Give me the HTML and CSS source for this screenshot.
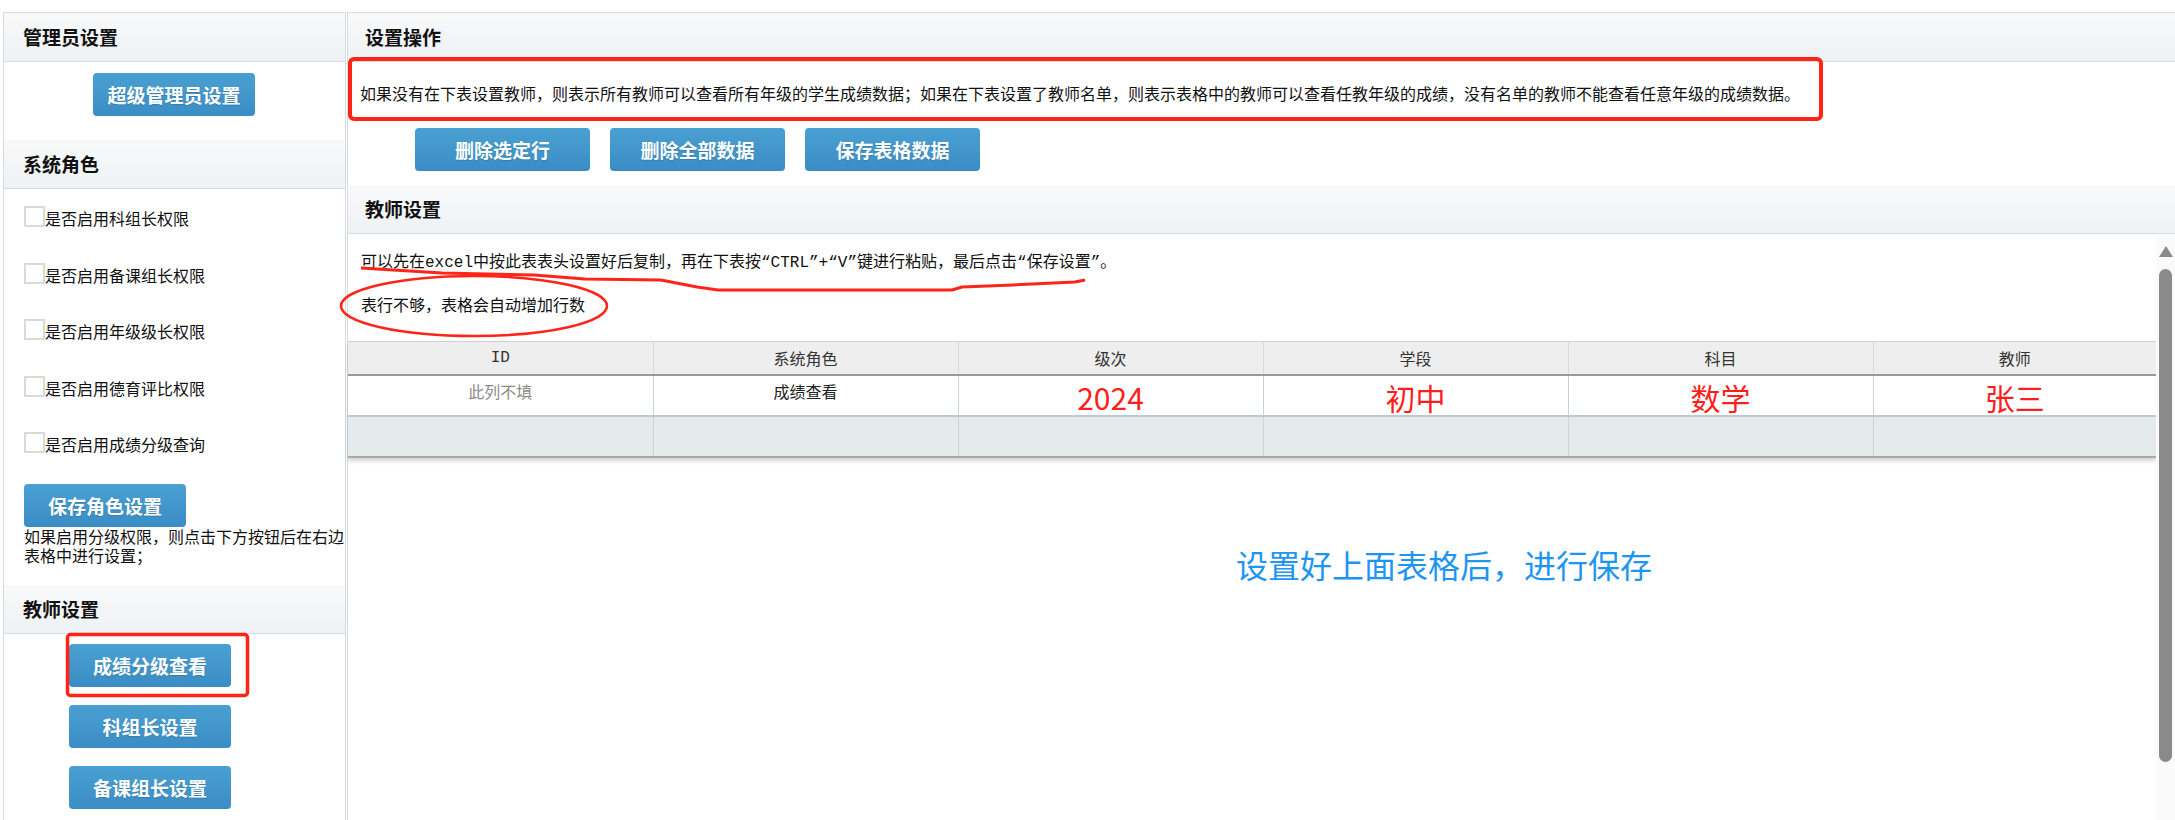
FILE: index.html
```html
<!DOCTYPE html>
<html lang="zh-CN">

<head>
    <meta charset="UTF-8">
    <title>成绩分级查看设置</title>
    <link rel="stylesheet" href="styles.css">
</head>

<body>

    <div class="page">
        <div class="side">
            <div class="panel-head">管理员设置</div>
            <div class="admin-body">
                <button class="btn btn-side">超级管理员设置</button>
            </div>

            <div class="panel-head">系统角色</div>
            <div class="role-body">
                <ul class="role-list">
                    <li><span class="check"></span>是否启用科组长权限</li>
                    <li><span class="check"></span>是否启用备课组长权限</li>
                    <li><span class="check"></span>是否启用年级级长权限</li>
                    <li><span class="check"></span>是否启用德育评比权限</li>
                    <li><span class="check"></span>是否启用成绩分级查询</li>
                </ul>
                <button class="btn btn-side btn-save-role">保存角色设置</button>
                <p class="side-note">如果启用分级权限，则点击下方按钮后在右边表格中进行设置；</p>
            </div>

            <div class="panel-head">教师设置</div>
            <div class="teacher-body">
                <button class="btn btn-side">成绩分级查看</button>
                <button class="btn btn-side">科组长设置</button>
                <button class="btn btn-side">备课组长设置</button>
            </div>
        </div>

        <div class="main">
            <div class="panel-head">设置操作</div>
            <p class="notice">如果没有在下表设置教师，则表示所有教师可以查看所有年级的学生成绩数据；如果在下表设置了教师名单，则表示表格中的教师可以查看任教年级的成绩，没有名单的教师不能查看任意年级的成绩数据。</p>
            <div class="toolbar">
                <button class="btn btn-tool">删除选定行</button>
                <button class="btn btn-tool">删除全部数据</button>
                <button class="btn btn-tool">保存表格数据</button>
            </div>

            <div class="panel-head">教师设置</div>
            <div class="scroll-wrap">
                <div class="scroll-content">
                    <p class="tip">可以先在excel中按此表表头设置好后复制，再在下表按“CTRL”+“V”键进行粘贴，最后点击“保存设置”。</p>
                    <p class="tip tip-second">表行不够，表格会自动增加行数</p>

                    <table class="grid">
                        <colgroup>
                            <col class="col">
                            <col class="col">
                            <col class="col">
                            <col class="col">
                            <col class="col">
                            <col>
                        </colgroup>
                        <thead>
                            <tr>
                                <th class="mono">ID</th>
                                <th>系统角色</th>
                                <th>级次</th>
                                <th>学段</th>
                                <th>科目</th>
                                <th>教师</th>
                            </tr>
                        </thead>
                        <tbody>
                            <tr class="row-filled">
                                <td class="muted">此列不填</td>
                                <td>成绩查看</td>
                                <td class="mark">2024</td>
                                <td class="mark">初中</td>
                                <td class="mark">数学</td>
                                <td class="mark">张三</td>
                            </tr>
                            <tr class="row-empty">
                                <td></td>
                                <td></td>
                                <td></td>
                                <td></td>
                                <td></td>
                                <td></td>
                            </tr>
                        </tbody>
                    </table>

                    <p class="save-hint">设置好上面表格后，进行保存</p>
                </div>

                <div class="fake-scroll">
                    <span class="arrow-up"></span>
                    <span class="thumb"></span>
                </div>
            </div>
        </div>

        <!-- red annotations drawn over the screenshot -->
        <svg class="marks" width="2175" height="820" viewBox="0 0 2175 820">
            <rect x="350" y="59" width="1471" height="60" rx="4" />
            <rect x="67.5" y="634.5" width="180" height="61" rx="3" class="thin" />
            <ellipse cx="474" cy="306" rx="133" ry="30" class="line" />
            <polyline class="line wave"
                points="361,268 442,273 534,275 585,279 661,280 697,287 718,290 952,290 962,287 1013,285 1075,282 1085,280" />
        </svg>
    </div>

</body>

</html>
```

FILE: styles.css
```css
html,
body {
    margin: 0;
    overflow: hidden;
    background: #fff;
}

body {
    font-family: 'Noto Sans CJK SC', sans-serif;
    color: #222;
}

.page {
    position: relative;
    display: flex;
    padding: 12px 0 0 3px;
    height: 808px;
}

.side {
    width: 341px;
    flex-shrink: 0;
    border: 1px solid #d6dde1;
    border-bottom: none;
    margin-right: 1px;
}

.main {
    flex: 1;
    display: flex;
    flex-direction: column;
    border-top: 1px solid #d6dde1;
    border-left: 1px solid #d6dde1;
    min-width: 0;
}

.panel-head {
    box-sizing: border-box;
    height: 49px;
    line-height: 48px;
    padding-left: 19px;
    font-size: 19px;
    font-weight: bold;
    color: #111;
    background: linear-gradient(#f8f9fa, #eef2f4);
    border-bottom: 1px solid #d6dde1;
    flex-shrink: 0;
}

.main .panel-head {
    padding-left: 17px;
}

.btn {
    display: block;
    height: 43px;
    border: none;
    border-radius: 4px;
    background: linear-gradient(#4aa0d2, #3a8dc5);
    color: #fff;
    font-family: 'Noto Sans CJK SC', sans-serif;
    font-size: 19px;
    font-weight: bold;
    text-shadow: 0 1px 1px rgba(0, 0, 0, 0.15);
    cursor: pointer;
    padding: 0;
}

.btn-side {
    width: 162px;
}

.btn-tool {
    width: 175px;
}

/* left column */

.admin-body {
    padding: 11px 0 24px;
}

.admin-body .btn {
    margin-left: 89px;
}

.role-body {
    padding: 19px 0 20px 20px;
}

.role-list {
    list-style: none;
    margin: 0;
    padding: 0;
    display: flex;
    flex-direction: column;
    gap: 35.5px;
}

.role-list li {
    display: flex;
    align-items: center;
    height: 21px;
    font-size: 16px;
    line-height: 21px;
    color: #111;
}

.check {
    box-sizing: border-box;
    width: 21px;
    height: 21px;
    border: 2px solid #d6ddd6;
    background: #fff;
    margin-top: -4px;
}

.btn-save-role {
    margin-top: 29px;
}

.side-note {
    margin: 0;
    font-size: 16px;
    line-height: 19px;
    color: #111;
}

.teacher-body {
    padding: 10px 0 0 65px;
    display: flex;
    flex-direction: column;
    gap: 18px;
}

/* right column */

.notice {
    margin: 0;
    padding: 19px 0 0 12px;
    font-size: 16px;
    line-height: 24px;
    color: #111;
    white-space: nowrap;
}

.toolbar {
    display: flex;
    gap: 20px;
    padding: 23px 0 14px 67px;
}

.scroll-wrap {
    flex: 1;
    display: flex;
    min-height: 0;
}

.scroll-content {
    flex: 1;
    min-width: 0;
}

.fake-scroll {
    width: 19px;
    flex-shrink: 0;
    background: #fafafa;
    display: flex;
    flex-direction: column;
    align-items: center;
}

.arrow-up {
    margin-top: 12px;
    width: 0;
    height: 0;
    border-left: 7px solid transparent;
    border-right: 7px solid transparent;
    border-bottom: 11px solid #8a8a8a;
}

.thumb {
    margin-top: 12px;
    width: 13px;
    height: 493px;
    border-radius: 7px;
    background: #8a8a8a;
}

.tip {
    margin: 0;
    padding: 17px 0 0 13px;
    font-family: 'Liberation Mono', 'Noto Sans CJK SC', monospace;
    font-size: 16px;
    line-height: 24px;
    color: #111;
}

.tip-second {
    padding-top: 20px;
}

.grid {
    width: 100%;
    margin-top: 22px;
    border-collapse: collapse;
    table-layout: fixed;
    box-shadow: 0 3px 4px rgba(0, 0, 0, 0.18);
}

.col {
    width: 305px;
}

.grid th {
    height: 32px;
    padding: 0;
    background: #eeeeee;
    border-top: 1px solid #cfcfcf;
    border-right: 1px solid #dadada;
    border-bottom: 2px solid #9a9a9a;
    font-weight: normal;
    font-size: 16px;
    color: #333;
}

.mono {
    font-family: 'Liberation Mono', monospace;
}

.grid td {
    padding: 5px 0 0;
    vertical-align: top;
    text-align: center;
    border-right: 1px solid #c6d5de;
    font-size: 16px;
    line-height: 20px;
}

.row-filled td {
    height: 34px;
    background: #fff;
    border-bottom: 2px solid #bfcad0;
}

.row-empty td {
    height: 34px;
    background: #e5ebeb;
    border-bottom: 2px solid #a9a9a9;
}

.grid td:last-child,
.grid th:last-child {
    border-right: none;
}

.muted {
    color: #8c8c8c;
}

.grid td.mark {
    color: #ff1e1e;
    font-size: 30px;
    line-height: 32px;
    padding-top: 5px;
}

.save-hint {
    margin: 86px 0 0 888px;
    font-size: 32px;
    line-height: 40px;
    color: #1f95f2;
}

/* annotations */

.marks {
    position: absolute;
    left: 0;
    top: 0;
    pointer-events: none;
}

.marks rect {
    fill: none;
    stroke: #ff2418;
    stroke-width: 4;
}

.marks rect.thin {
    stroke-width: 3.5;
}

.marks .line {
    fill: none;
    stroke: #ff2418;
    stroke-width: 2.5;
}

.marks .wave {
    stroke-width: 3;
    stroke-linejoin: round;
}
```
